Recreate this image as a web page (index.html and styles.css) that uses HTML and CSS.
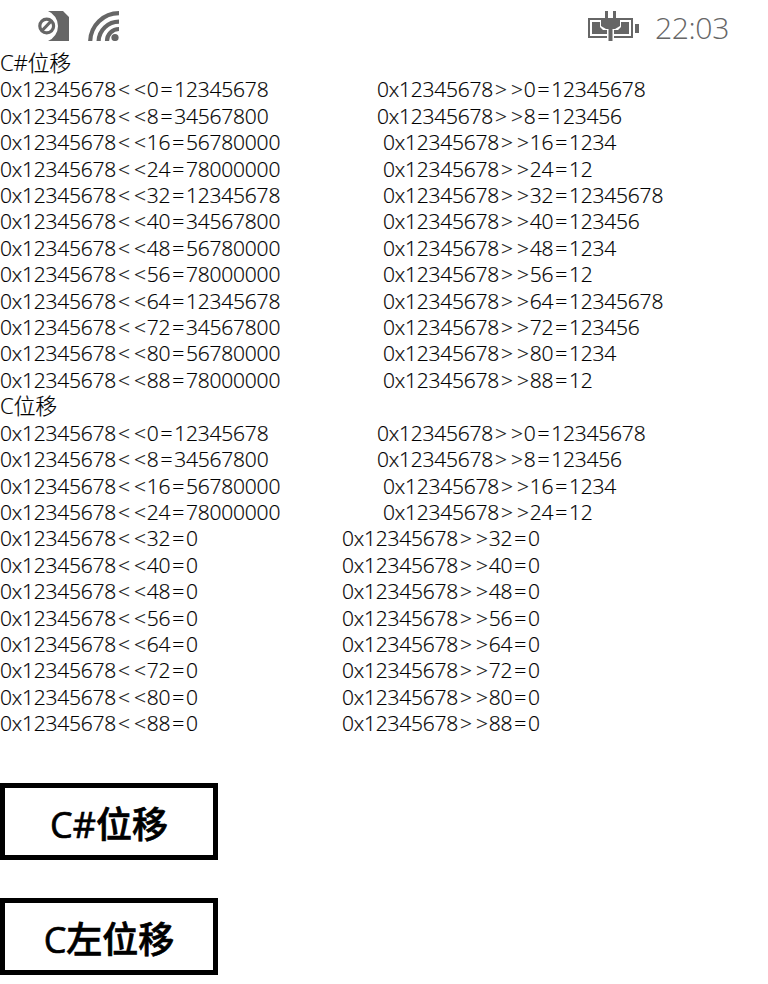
FILE: index.html
```html
<!DOCTYPE html>
<html lang="zh">
<head>
<meta charset="utf-8">
<title>位移</title>
<link rel="stylesheet" href="styles.css">
</head>
<body>
<header class="status">
  <div class="status-left">
    <svg class="icon" viewBox="0 0 31 30" width="31" height="30"><path fill="#666" d="M10 0H25L31 6V30H10A16.25 16.25 0 0 0 10 0Z"/><circle cx="8.7" cy="15" r="6.9" fill="none" stroke="#666" stroke-width="3.2"/><path d="M3.700 20L13.700 9.500" stroke="#666" stroke-width="3.2" fill="none"/></svg>
    <svg class="icon" viewBox="0 0 31 30" width="31" height="30" fill="none" stroke="#666" stroke-width="4.2"><path d="M2.200 30A28.800 28.800 0 0 1 31 2.200"/><path d="M10.600 30A20.400 20.400 0 0 1 31 10.600"/><path d="M19 30A12 12 0 0 1 31 18"/><circle cx="27" cy="26.500" r="3.600" fill="#666" stroke="none"/></svg>
  </div>
  <div class="status-right">
    <svg class="icon" viewBox="0 0 51 30" width="51" height="30"><path fill="none" stroke="#666" stroke-width="2" d="M13 8H1V26H19M32 8H44V26H26"/><path fill="#666" d="M4 11H12V16L15 19H19V23H4ZM33 11H41V23H26V19H30L33 16Z"/><path fill="#666" d="M17 0H20V7H25V0H28V7H32V15L27 18H24.500V30H20.500V18H18L13 15V7H17Z"/><rect x="47" y="13" width="4" height="9" fill="#666"/></svg>
    <span class="time">22:03</span>
  </div>
</header>
<main class="log">
  <div class="title">C#位移</div>
  <div class="row"><span class="left wide">0x12345678<span class="sh"><span class="gap">&lt;</span>&lt;</span>0<span class="eq">=</span>12345678</span><span>0x12345678<span class="sh"><span class="gap">&gt;</span>&gt;</span>0<span class="eq">=</span>12345678</span></div>
  <div class="row"><span class="left wide">0x12345678<span class="sh"><span class="gap">&lt;</span>&lt;</span>8<span class="eq">=</span>34567800</span><span>0x12345678<span class="sh"><span class="gap">&gt;</span>&gt;</span>8<span class="eq">=</span>123456</span></div>
  <div class="row"><span class="left mid">0x12345678<span class="sh"><span class="gap">&lt;</span>&lt;</span>16<span class="eq">=</span>56780000</span><span>0x12345678<span class="sh"><span class="gap">&gt;</span>&gt;</span>16<span class="eq">=</span>1234</span></div>
  <div class="row"><span class="left mid">0x12345678<span class="sh"><span class="gap">&lt;</span>&lt;</span>24<span class="eq">=</span>78000000</span><span>0x12345678<span class="sh"><span class="gap">&gt;</span>&gt;</span>24<span class="eq">=</span>12</span></div>
  <div class="row"><span class="left mid">0x12345678<span class="sh"><span class="gap">&lt;</span>&lt;</span>32<span class="eq">=</span>12345678</span><span>0x12345678<span class="sh"><span class="gap">&gt;</span>&gt;</span>32<span class="eq">=</span>12345678</span></div>
  <div class="row"><span class="left mid">0x12345678<span class="sh"><span class="gap">&lt;</span>&lt;</span>40<span class="eq">=</span>34567800</span><span>0x12345678<span class="sh"><span class="gap">&gt;</span>&gt;</span>40<span class="eq">=</span>123456</span></div>
  <div class="row"><span class="left mid">0x12345678<span class="sh"><span class="gap">&lt;</span>&lt;</span>48<span class="eq">=</span>56780000</span><span>0x12345678<span class="sh"><span class="gap">&gt;</span>&gt;</span>48<span class="eq">=</span>1234</span></div>
  <div class="row"><span class="left mid">0x12345678<span class="sh"><span class="gap">&lt;</span>&lt;</span>56<span class="eq">=</span>78000000</span><span>0x12345678<span class="sh"><span class="gap">&gt;</span>&gt;</span>56<span class="eq">=</span>12</span></div>
  <div class="row"><span class="left mid">0x12345678<span class="sh"><span class="gap">&lt;</span>&lt;</span>64<span class="eq">=</span>12345678</span><span>0x12345678<span class="sh"><span class="gap">&gt;</span>&gt;</span>64<span class="eq">=</span>12345678</span></div>
  <div class="row"><span class="left mid">0x12345678<span class="sh"><span class="gap">&lt;</span>&lt;</span>72<span class="eq">=</span>34567800</span><span>0x12345678<span class="sh"><span class="gap">&gt;</span>&gt;</span>72<span class="eq">=</span>123456</span></div>
  <div class="row"><span class="left mid">0x12345678<span class="sh"><span class="gap">&lt;</span>&lt;</span>80<span class="eq">=</span>56780000</span><span>0x12345678<span class="sh"><span class="gap">&gt;</span>&gt;</span>80<span class="eq">=</span>1234</span></div>
  <div class="row"><span class="left mid">0x12345678<span class="sh"><span class="gap">&lt;</span>&lt;</span>88<span class="eq">=</span>78000000</span><span>0x12345678<span class="sh"><span class="gap">&gt;</span>&gt;</span>88<span class="eq">=</span>12</span></div>
  <div class="title">C位移</div>
  <div class="row"><span class="left wide">0x12345678<span class="sh"><span class="gap">&lt;</span>&lt;</span>0<span class="eq">=</span>12345678</span><span>0x12345678<span class="sh"><span class="gap">&gt;</span>&gt;</span>0<span class="eq">=</span>12345678</span></div>
  <div class="row"><span class="left wide">0x12345678<span class="sh"><span class="gap">&lt;</span>&lt;</span>8<span class="eq">=</span>34567800</span><span>0x12345678<span class="sh"><span class="gap">&gt;</span>&gt;</span>8<span class="eq">=</span>123456</span></div>
  <div class="row"><span class="left mid">0x12345678<span class="sh"><span class="gap">&lt;</span>&lt;</span>16<span class="eq">=</span>56780000</span><span>0x12345678<span class="sh"><span class="gap">&gt;</span>&gt;</span>16<span class="eq">=</span>1234</span></div>
  <div class="row"><span class="left mid">0x12345678<span class="sh"><span class="gap">&lt;</span>&lt;</span>24<span class="eq">=</span>78000000</span><span>0x12345678<span class="sh"><span class="gap">&gt;</span>&gt;</span>24<span class="eq">=</span>12</span></div>
  <div class="row"><span class="left narrow">0x12345678<span class="sh"><span class="gap">&lt;</span>&lt;</span>32<span class="eq">=</span>0</span><span>0x12345678<span class="sh"><span class="gap">&gt;</span>&gt;</span>32<span class="eq">=</span>0</span></div>
  <div class="row"><span class="left narrow">0x12345678<span class="sh"><span class="gap">&lt;</span>&lt;</span>40<span class="eq">=</span>0</span><span>0x12345678<span class="sh"><span class="gap">&gt;</span>&gt;</span>40<span class="eq">=</span>0</span></div>
  <div class="row"><span class="left narrow">0x12345678<span class="sh"><span class="gap">&lt;</span>&lt;</span>48<span class="eq">=</span>0</span><span>0x12345678<span class="sh"><span class="gap">&gt;</span>&gt;</span>48<span class="eq">=</span>0</span></div>
  <div class="row"><span class="left narrow">0x12345678<span class="sh"><span class="gap">&lt;</span>&lt;</span>56<span class="eq">=</span>0</span><span>0x12345678<span class="sh"><span class="gap">&gt;</span>&gt;</span>56<span class="eq">=</span>0</span></div>
  <div class="row"><span class="left narrow">0x12345678<span class="sh"><span class="gap">&lt;</span>&lt;</span>64<span class="eq">=</span>0</span><span>0x12345678<span class="sh"><span class="gap">&gt;</span>&gt;</span>64<span class="eq">=</span>0</span></div>
  <div class="row"><span class="left narrow">0x12345678<span class="sh"><span class="gap">&lt;</span>&lt;</span>72<span class="eq">=</span>0</span><span>0x12345678<span class="sh"><span class="gap">&gt;</span>&gt;</span>72<span class="eq">=</span>0</span></div>
  <div class="row"><span class="left narrow">0x12345678<span class="sh"><span class="gap">&lt;</span>&lt;</span>80<span class="eq">=</span>0</span><span>0x12345678<span class="sh"><span class="gap">&gt;</span>&gt;</span>80<span class="eq">=</span>0</span></div>
  <div class="row"><span class="left narrow">0x12345678<span class="sh"><span class="gap">&lt;</span>&lt;</span>88<span class="eq">=</span>0</span><span>0x12345678<span class="sh"><span class="gap">&gt;</span>&gt;</span>88<span class="eq">=</span>0</span></div>
</main>
<div class="actions">
  <button class="btn" type="button">C#位移</button>
  <button class="btn" type="button">C左位移</button>
</div>
</body>
</html>
```
FILE: styles.css
```css
html, body {
  margin: 0;
  padding: 0;
  background: #fff;
}
body {
  width: 768px;
  height: 984px;
  overflow: hidden;
  color: #000;
  font-family: "Open Sans", "Noto Sans CJK SC", sans-serif;
  font-weight: 300;
}
.status {
  height: 50px;
  display: flex;
  justify-content: space-between;
  align-items: flex-start;
  box-sizing: border-box;
  padding: 11px 39px 0 38px;
}
.status-left {
  display: flex;
  gap: 19px;
}
.status-right {
  display: flex;
  align-items: flex-start;
  gap: 16px;
}
.icon {
  display: block;
}
.time {
  color: #666;
  font-size: 30.2px;
  letter-spacing: -0.4px;
  line-height: 34px;
}
.log {
  display: grid;
  grid-auto-rows: 26.42px;
  font-size: 21px;
  letter-spacing: -0.23px;
  line-height: 26.42px;
  -webkit-text-stroke: 0.2px #000;
}
.title {
  font-size: 22px;
  line-height: 24px;
  white-space: nowrap;
}
.row {
  display: flex;
  white-space: nowrap;
}
.left {
  flex: none;
}
.wide {
  width: 377px;
}
.mid {
  width: 383px;
}
.narrow {
  width: 342px;
}
.sh {
  margin: 0 1px 0 2px;
}
.gap {
  letter-spacing: 4px;
}
.eq {
  margin: 0 2px;
}
.actions {
  display: flex;
  flex-direction: column;
  align-items: flex-start;
  gap: 38px;
  margin-top: 46px;
}
.btn {
  width: 218px;
  height: 77px;
  padding: 3px 0 0;
  background: #fff;
  border: 5px solid #000;
  border-radius: 0;
  color: #000;
  font-family: "Open Sans", "Noto Sans CJK SC", sans-serif;
  font-size: 36px;
  font-weight: 500;
  -webkit-text-stroke: 0.7px #000;
}
```
